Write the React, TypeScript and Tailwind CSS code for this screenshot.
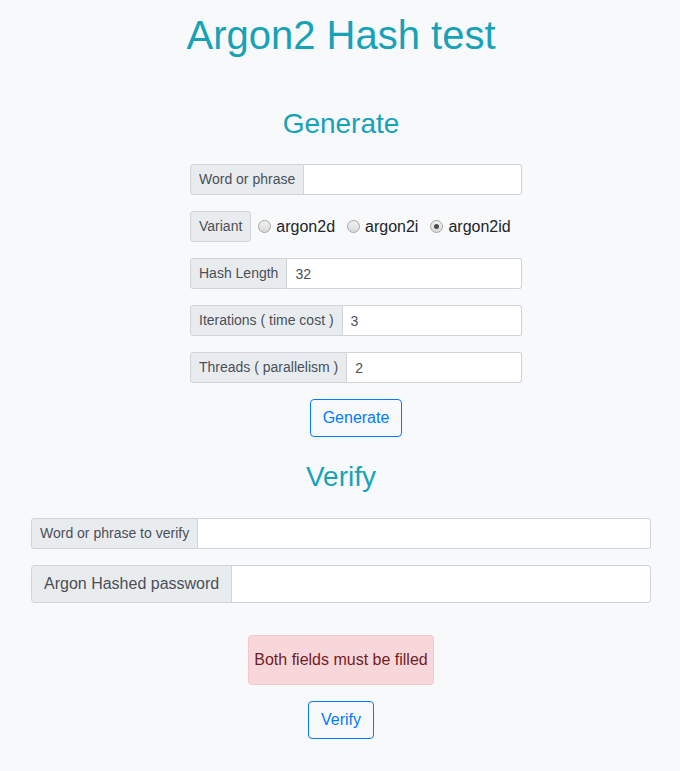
import { useState } from "react";

const font = { fontFamily: '"Liberation Sans", Arial, sans-serif' };

function SmallGroup({ label, value, onChange }: { label: string; value: string; onChange: (v: string) => void }) {
  return (
    <div className="flex h-[31px] w-full">
      <span className="flex items-center whitespace-nowrap rounded-l-[3px] border border-[#ced4da] bg-[#e9ecef] px-2 pb-[1px] text-sm text-[#495057]">
        {label}
      </span>
      <input
        value={value}
        onChange={(e) => onChange(e.target.value)}
        className="min-w-0 flex-1 rounded-r-[3px] border border-l-0 border-[#ced4da] bg-white px-2 text-sm text-[#495057] outline-none"
      />
    </div>
  );
}

function Radio({ checked, label, onClick }: { checked: boolean; label: string; onClick: () => void }) {
  return (
    <label onClick={onClick} className="ml-[7px] flex cursor-pointer items-center gap-[5px] text-base text-[#212529]">
      <span className="flex h-[13px] w-[13px] items-center justify-center rounded-full border border-[#a6a6a6] bg-gradient-to-b from-[#f2f2f2] to-[#d9d9d9]">
        {checked && <span className="h-[5px] w-[5px] rounded-full bg-[#4d4d4d]" />}
      </span>
      <span className="mr-[5px]">{label}</span>
    </label>
  );
}

export default function App() {
  const [word, setWord] = useState("");
  const [variant, setVariant] = useState("argon2id");
  const [hashLen, setHashLen] = useState("32");
  const [iters, setIters] = useState("3");
  const [threads, setThreads] = useState("2");
  const [verifyWord, setVerifyWord] = useState("");
  const [hashed, setHashed] = useState("");

  return (
    <div style={font} className="min-h-[771px] bg-[#f8f9fa] pl-[2px] pt-[11px] text-[#212529]">
      <h1 className="text-center text-[40px] leading-[48px] text-[#17a2b8]">Argon2 Hash test</h1>

      <h2 className="mt-[48px] text-center text-[28px] leading-[34px] text-[#17a2b8]">Generate</h2>

      <div className="mx-auto mt-[23px] w-[362px] pl-[30px]">
        <div className="flex flex-col gap-4">
          <SmallGroup label="Word or phrase" value={word} onChange={setWord} />
          <div className="flex h-[31px] items-stretch">
            <span className="flex items-center rounded-[3px] border border-[#ced4da] bg-[#e9ecef] px-2 pb-[1px] text-sm text-[#495057]">
              Variant
            </span>
            {["argon2d", "argon2i", "argon2id"].map((v) => (
              <Radio key={v} label={v} checked={variant === v} onClick={() => setVariant(v)} />
            ))}
          </div>
          <SmallGroup label="Hash Length" value={hashLen} onChange={setHashLen} />
          <SmallGroup label="Iterations ( time cost )" value={iters} onChange={setIters} />
          <SmallGroup label="Threads ( parallelism )" value={threads} onChange={setThreads} />
        </div>
        <div className="mt-4 flex justify-center">
          <button className="h-[38px] rounded border border-[#007bff] px-3 text-base text-[#007bff] hover:bg-[#007bff] hover:text-white">
            Generate
          </button>
        </div>
      </div>

      <h2 className="mt-[23px] text-center text-[28px] leading-[34px] text-[#17a2b8]">Verify</h2>

      <div className="mx-auto mt-[24px] w-[620px]">
        <SmallGroup label="Word or phrase to verify" value={verifyWord} onChange={setVerifyWord} />
        <div className="mt-4 flex h-[38px] w-full">
          <span className="flex items-center whitespace-nowrap rounded-l border border-[#ced4da] bg-[#e9ecef] px-3 text-base text-[#495057]">
            Argon Hashed password
          </span>
          <input
            value={hashed}
            onChange={(e) => setHashed(e.target.value)}
            className="min-w-0 flex-1 rounded-r border border-l-0 border-[#ced4da] bg-white px-3 text-base text-[#495057] outline-none"
          />
        </div>
      </div>

      <div className="mt-[32px] flex justify-center">
        <div className="rounded border border-[#f5c6cb] bg-[#f8d7da] px-[5px] py-3 text-base leading-6 text-[#721c24]">
          Both fields must be filled
        </div>
      </div>

      <div className="mt-4 flex justify-center">
        <button className="h-[38px] rounded border border-[#007bff] px-3 text-base text-[#007bff] hover:bg-[#007bff] hover:text-white">
          Verify
        </button>
      </div>
    </div>
  );
}
